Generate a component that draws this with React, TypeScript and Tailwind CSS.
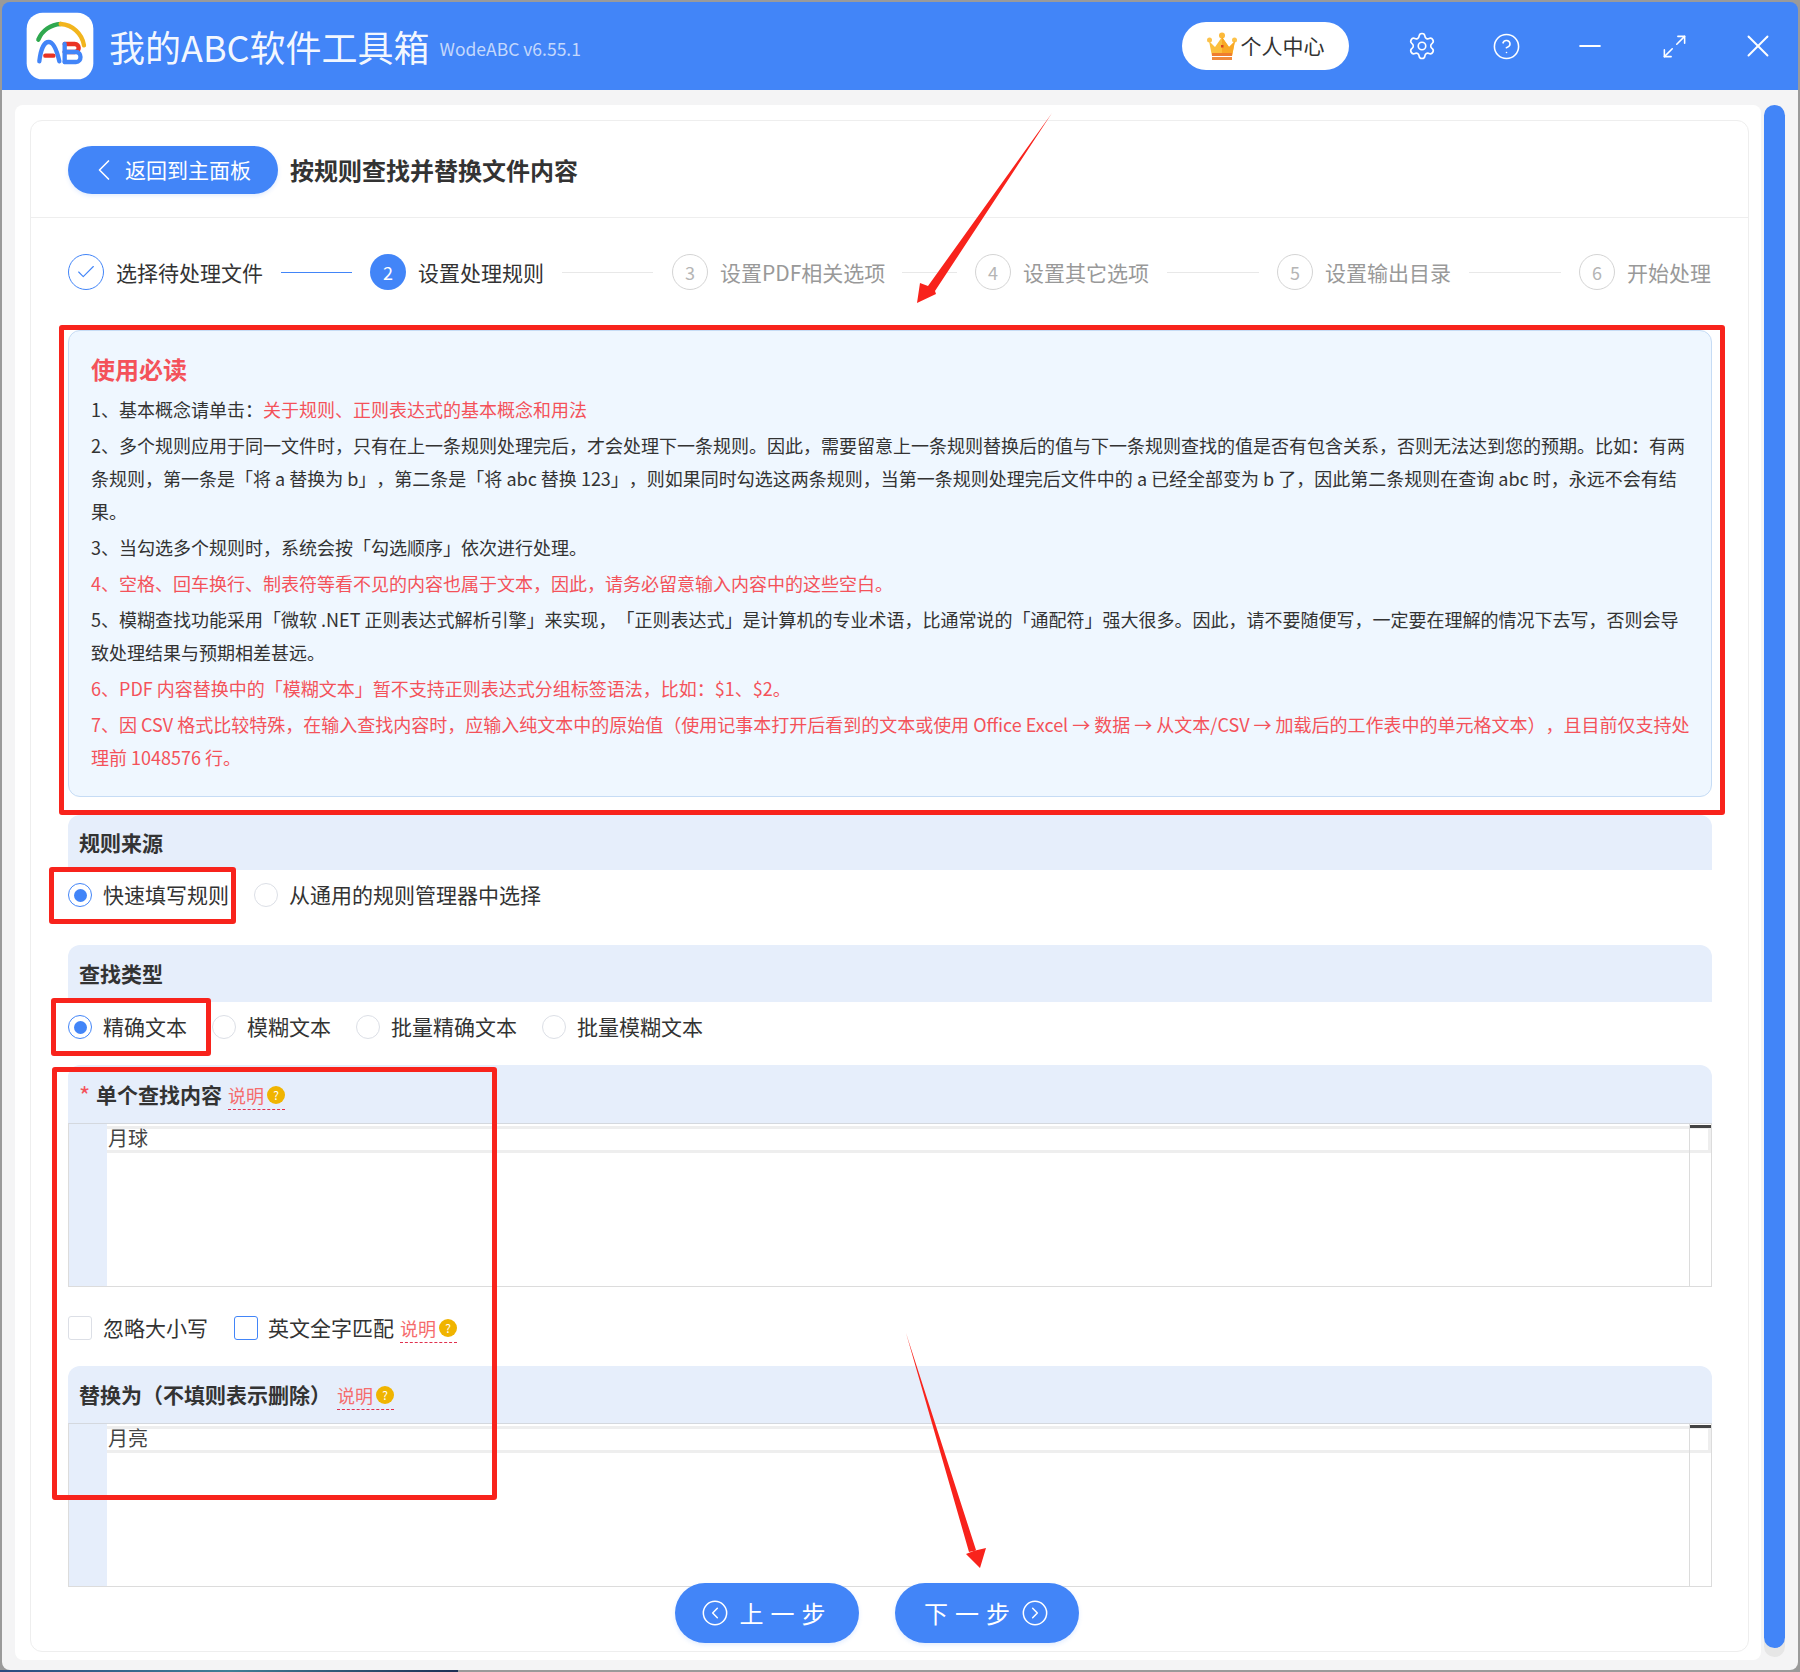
import React from "react";
import { Check, ChevronLeft, CircleChevronLeft, CircleChevronRight, CircleHelp, Maximize2, Minus, Settings, X } from "lucide-react";

const FONT = "[font-family:'Noto_Sans_CJK_SC','Noto_Sans',sans-serif] [text-spacing-trim:space-all]";

function Logo() {
  return (
    <svg width="80" height="76" viewBox="0 0 240 228" className="shrink-0">
      <rect x="20" y="14" width="200" height="200" rx="48" fill="#ffffff" />
      <g fill="none" strokeWidth="13" strokeLinecap="round">
        <path d="M55 95 A 76 76 0 0 1 122 48" stroke="#2fa84f" />
        <path d="M122 48 A 76 76 0 0 1 192 112" stroke="#f2b51d" />
        <path d="M58 160 C 62 125 72 102 86 102 C 100 102 110 125 118 160" stroke="#4285f8" />
        <path d="M76 143 H 100" stroke="#ea3323" />
        <path d="M134 108 H 164 C 180 108 180 132 164 132 H 134" stroke="#ea3323" />
        <path d="M134 132 H 168 C 186 132 186 162 168 162 H 134 " stroke="#4285f8" />
        <path d="M134 108 V 162" stroke="#4285f8" />
      </g>
    </svg>
  );
}

function Crown() {
  return (
    <svg width="30" height="28" viewBox="0 0 30 28" className="shrink-0">
      <path d="M2 9 L8 15 L15 5 L22 15 L28 9 L25 24 H5 Z" fill="#fbbf3c" />
      <circle cx="2.5" cy="8" r="2.5" fill="#fcc24a" />
      <circle cx="15" cy="3.5" r="3" fill="#fcb93a" />
      <circle cx="27.5" cy="8" r="2.5" fill="#fcc24a" />
      <path d="M15 5 L22 15 L28 9 L25 24 H15 Z" fill="#f9a825" />
      <rect x="5" y="21" width="20" height="3" fill="#ef7d2e" />
      <rect x="5" y="25" width="20" height="3" fill="#f08a3c" />
      <rect x="14" y="13" width="2.5" height="2.5" fill="#d8461f" />
    </svg>
  );
}

function Step({ n, label, state, line, labelW }: { n: number; label: string; state: "done" | "active" | "todo"; line?: string; labelW?: string }) {
  return (
    <div className="flex items-center">
      {state === "done" && (
        <span className="flex h-9 w-9 items-center justify-center rounded-full border border-[#4285f8] text-[#4285f8]">
          <Check size={22} strokeWidth={1.2} />
        </span>
      )}
      {state === "active" && (
        <span className="flex h-9 w-9 items-center justify-center rounded-full bg-[#4285f8] text-[18px] text-white">{n}</span>
      )}
      {state === "todo" && (
        <span className="flex h-9 w-9 items-center justify-center rounded-full border border-[#d4d4d4] text-[18px] text-[#b5b5b5]">{n}</span>
      )}
      <span className={`ml-[12px] mt-[1px] whitespace-nowrap text-[21px] ${labelW ?? ""} ${state === "todo" ? "text-[#999999]" : "text-[#333333]"}`}>{label}</span>
      {line && <span className={`h-px ${line}`} />}
    </div>
  );
}

function Radio({ label, on, className }: { label: string; on?: boolean; className?: string }) {
  return (
    <div className={`flex items-center ${className ?? ""}`}>
      <span className={`flex h-6 w-6 items-center justify-center rounded-full border ${on ? "border-[#4285f8]" : "border-[#dcdfe6]"}`}>
        {on && <span className="h-[13px] w-[13px] rounded-full bg-[#4285f8]" />}
      </span>
      <span className="ml-[11px] whitespace-nowrap text-[21px] text-[#333333]">{label}</span>
    </div>
  );
}

function Tip({ className }: { className?: string }) {
  return (
    <span className={`inline-flex items-center border-b border-dashed border-[#e0304e] pb-[2px] ${className ?? "ml-[3px] mt-[3px]"}`}>
      <span className="text-[18px] leading-[24px] text-[#f56c6c]">说明</span>
      <span className="ml-[3px] flex h-[18px] w-[18px] items-center justify-center rounded-full bg-[#f0b400] text-[12px] text-white">?</span>
    </span>
  );
}

function SectionHead({ children, h }: { children: React.ReactNode; h: string }) {
  return <div className={`flex items-center gap-[3px] rounded-t-[12px] bg-[#e6eefb] px-[11px] pt-[1px] ${h}`}>{children}</div>;
}

function Bold({ children }: { children: React.ReactNode }) {
  return <span className="whitespace-nowrap text-[21px] font-bold text-[#333333]">{children}</span>;
}

function Editor({ value }: { value: string }) {
  return (
    <div className="relative flex h-[164px] border border-[#dcdcdc] border-t-[#d4d8de] bg-white">
      <div className="w-[38px] shrink-0 bg-[#e6eefb]" />
      <div className="min-w-0 flex-1 pt-[2px]">
        <div className="h-[27px] border-y-[3px] border-r-[3px] border-[#eeeeee] pl-[1px] text-[20px] leading-[18px] text-[#444444]">{value}</div>
      </div>
      <div className="absolute bottom-0 right-0 top-0 w-[22px] border-l border-[#dcdcdc]">
        <div className="mt-[1px] h-[3px] bg-[#444444]" />
      </div>
    </div>
  );
}

function RedBox({ className }: { className: string }) {
  return <div className={`pointer-events-none absolute z-20 rounded-[3px] border-[5px] border-[#f8231c] ${className}`} />;
}

function PageButton({ children, gap }: { children: React.ReactNode; gap: string }) {
  return (
    <div className={`relative z-10 flex h-[60px] w-[184px] items-center justify-center rounded-[30px] bg-[#4285f8] text-[24px] tracking-[7px] text-white shadow-[0_2px_4px_rgba(66,133,248,0.15)] ${gap}`}>
      {children}
    </div>
  );
}

export default function App() {
  return (
    <div className={`relative h-[1672px] w-[1800px] overflow-hidden bg-[#9a9a9a] ${FONT}`}>
      <div className="flex h-[1670px] flex-col pl-[2px] pr-[2px] pt-[2px]">
        {/* title bar */}
        <header className="flex h-[88px] shrink-0 items-center rounded-t-[8px] bg-[#4285f8] pl-[18px] text-white">
          <Logo />
          <span className="ml-[9px] whitespace-nowrap text-[36px] leading-none text-white/95">我的ABC软件工具箱</span>
          <span className="ml-[10px] mt-[6px] whitespace-nowrap text-[17.5px] text-[#c4d8fc]">WodeABC v6.55.1</span>
          <div className="ml-auto flex items-center pr-[4px]">
            <div className="mr-[37px] flex h-[48px] w-[167px] items-center justify-center gap-[4px] rounded-[24px] bg-white text-[21px] text-[#333333]">
              <Crown />
              <span className="whitespace-nowrap">个人中心</span>
            </div>
            <div className="flex w-[72px] justify-center"><Settings size={30} strokeWidth={1.3} /></div>
            <div className="ml-[12px] flex w-[72px] justify-center"><CircleHelp size={29} strokeWidth={1.3} /></div>
            <div className="ml-[12px] flex w-[72px] justify-center"><Minus size={34} strokeWidth={1.3} /></div>
            <div className="ml-[12px] flex w-[72px] justify-center"><Maximize2 size={27} strokeWidth={1.4} /></div>
            <div className="ml-[12px] flex w-[72px] justify-center"><X size={38} strokeWidth={1.2} /></div>
          </div>
        </header>

        {/* body */}
        <div className="flex min-h-0 flex-1 rounded-b-[8px] bg-[#f4f4f5] pb-[10px] pl-[13px] pr-[13px] pt-[15px]">
          <div className="w-[1746px] shrink-0 rounded-[8px] bg-white pb-[6px] pl-[15px] pr-[12px] pt-[15px]">
            <div className="h-[1532px] rounded-[12px] border border-[#eeeeee]">
              <div className="flex h-[97px] items-center border-b border-[#eeeeee] pl-[37px] pt-[1px]">
                <div className="flex h-[48px] w-[210px] items-center rounded-[24px] bg-[#4285f8] pl-[18px] text-[21px] text-white shadow-[0_2px_4px_rgba(66,133,248,0.15)]">
                  <ChevronLeft size={36} strokeWidth={1.1} />
                  <span className="ml-[3px] whitespace-nowrap">返回到主面板</span>
                </div>
                <h1 className="ml-[12px] whitespace-nowrap text-[24px] font-bold text-[#333333]">按规则查找并替换文件内容</h1>
              </div>

              <div className="pl-[37px] pr-[36px]">
                <div className="flex items-center pt-[36px]">
                  <Step n={1} label="选择待处理文件" state="done" line="ml-[18px] mr-[18px] w-[71px] bg-[#4285f8]" />
                  <Step n={2} label="设置处理规则" state="active" line="ml-[18px] mr-[19px] w-[91px] bg-[#e8e8e8]" />
                  <Step n={3} label="设置PDF相关选项" state="todo" line="ml-[19px] mr-[18px] w-[55px] bg-[#e8e8e8]" labelW="w-[163px]" />
                  <Step n={4} label="设置其它选项" state="todo" line="ml-[18px] mr-[18px] w-[92px] bg-[#e8e8e8]" />
                  <Step n={5} label="设置输出目录" state="todo" line="ml-[18px] mr-[18px] w-[92px] bg-[#e8e8e8]" />
                  <Step n={6} label="开始处理" state="todo" />
                </div>

                <div className="mt-[40px] h-[467px] rounded-[12px] border border-[#c6dcf5] bg-[#eff7ff] pl-[22px] pr-[18px] pt-[21px] text-[18px] leading-[33px] text-[#333333]">
                  <h2 className="mb-[8px] text-[24px] font-bold leading-[33px] text-[#f4525a]">使用必读</h2>
                  <p className="mb-[3px]">1、基本概念请单击：<span className="text-[#f4525a]">关于规则、正则表达式的基本概念和用法</span></p>
                  <p className="mb-[3px]">2、多个规则应用于同一文件时，只有在上一条规则处理完后，才会处理下一条规则。因此，需要留意上一条规则替换后的值与下一条规则查找的值是否有包含关系，否则无法达到您的预期。比如：有两条规则，第一条是「将 a 替换为 b」，第二条是「将 abc 替换 123」，则如果同时勾选这两条规则，当第一条规则处理完后文件中的 a 已经全部变为 b 了，因此第二条规则在查询 abc 时，永远不会有结果。</p>
                  <p className="mb-[3px]">3、当勾选多个规则时，系统会按「勾选顺序」依次进行处理。</p>
                  <p className="mb-[3px] text-[#f4525a]">4、空格、回车换行、制表符等看不见的内容也属于文本，因此，请务必留意输入内容中的这些空白。</p>
                  <p className="mb-[3px]">5、模糊查找功能采用「微软 .NET 正则表达式解析引擎」来实现，「正则表达式」是计算机的专业术语，比通常说的「通配符」强大很多。因此，请不要随便写，一定要在理解的情况下去写，否则会导致处理结果与预期相差甚远。</p>
                  <p className="mb-[3px] text-[#f4525a]">6、PDF 内容替换中的「模糊文本」暂不支持正则表达式分组标签语法，比如：$1、$2。</p>
                  <p className="text-[#f4525a]">7、因 CSV 格式比较特殊，在输入查找内容时，应输入纯文本中的原始值（使用记事本打开后看到的文本或使用 Office Excel → 数据 → 从文本/CSV → 加载后的工作表中的单元格文本），且目前仅支持处理前 1048576 行。</p>
                </div>

                <div className="mt-[18px]">
                  <SectionHead h="h-[55px]"><Bold>规则来源</Bold></SectionHead>
                  <div className="flex h-[50px] items-center">
                    <Radio label="快速填写规则" on />
                    <Radio label="从通用的规则管理器中选择" className="ml-[25px]" />
                  </div>
                </div>

                <div className="mt-[25px]">
                  <SectionHead h="h-[57px]"><Bold>查找类型</Bold></SectionHead>
                  <div className="flex h-[50px] items-center">
                    <Radio label="精确文本" on className="w-[144px]" />
                    <Radio label="模糊文本" className="w-[144px]" />
                    <Radio label="批量精确文本" className="w-[186px]" />
                    <Radio label="批量模糊文本" />
                  </div>
                </div>

                <div className="mt-[13px]">
                  <SectionHead h="h-[58px]">
                    <span className="w-[14px] text-[24px] leading-none text-[#f4525a]">*</span>
                    <Bold>单个查找内容</Bold>
                    <Tip />
                  </SectionHead>
                  <Editor value="月球" />
                </div>

                <div className="mb-[14px] mt-[17px] flex h-[48px] items-center">
                  <span className="h-6 w-6 rounded-[3px] border border-[#dcdfe6] bg-white" />
                  <span className="ml-[11px] whitespace-nowrap text-[21px] text-[#333333]">忽略大小写</span>
                  <span className="ml-[26px] h-6 w-6 rounded-[3px] border border-[#4285f8] bg-white" />
                  <span className="ml-[10px] whitespace-nowrap text-[21px] text-[#333333]">英文全字匹配</span>
                  <Tip className="ml-[6px] mt-[3px]" />
                </div>

                <div>
                  <SectionHead h="h-[57px]">
                    <Bold>替换为（不填则表示删除）</Bold>
                    <Tip className="ml-[3px] mt-[3px]" />
                  </SectionHead>
                  <Editor value="月亮" />
                </div>

                <div className="-mt-[4px] flex justify-center gap-[36px] pr-[27px]">
                  <PageButton gap="gap-[11px]">
                    <CircleChevronLeft size={28} strokeWidth={1.3} />
                    <span className="whitespace-nowrap">上一步</span>
                  </PageButton>
                  <PageButton gap="gap-[4px]">
                    <span className="whitespace-nowrap">下一步</span>
                    <CircleChevronRight size={28} strokeWidth={1.3} />
                  </PageButton>
                </div>
              </div>
            </div>
          </div>

          {/* scrollbar */}
          <div className="ml-[3px] h-[1552px] w-[21px] rounded-full bg-[#e6e6e6]">
            <div className="h-[1543px] rounded-full bg-[#4285f8]" />
          </div>
        </div>
      </div>

      {/* desktop strip under the window */}
      <div className="flex h-[2px]">
        <div className="w-[458px] bg-gradient-to-r from-[#2a4a80] via-[#3f7f96] to-[#1f2f55]" />
      </div>

      {/* annotations */}
      <RedBox className="left-[59px] top-[325px] h-[490px] w-[1666px]" />
      <RedBox className="left-[49px] top-[867px] h-[57px] w-[187px]" />
      <RedBox className="left-[51px] top-[998px] h-[58px] w-[160px]" />
      <RedBox className="left-[52px] top-[1067px] h-[433px] w-[445px]" />
      <svg className="pointer-events-none absolute left-0 top-0 z-20" width="1800" height="1672" viewBox="0 0 1800 1672">
        <path d="M1052 113 L935 291 L936 294 L917 303 L920 283 L928 286 Z" fill="#f8231c" />
        <path d="M906 1333 L969 1552 L986 1548 L980 1568 L966 1554 L976 1550 Z" fill="#f8231c" />
      </svg>
    </div>
  );
}
